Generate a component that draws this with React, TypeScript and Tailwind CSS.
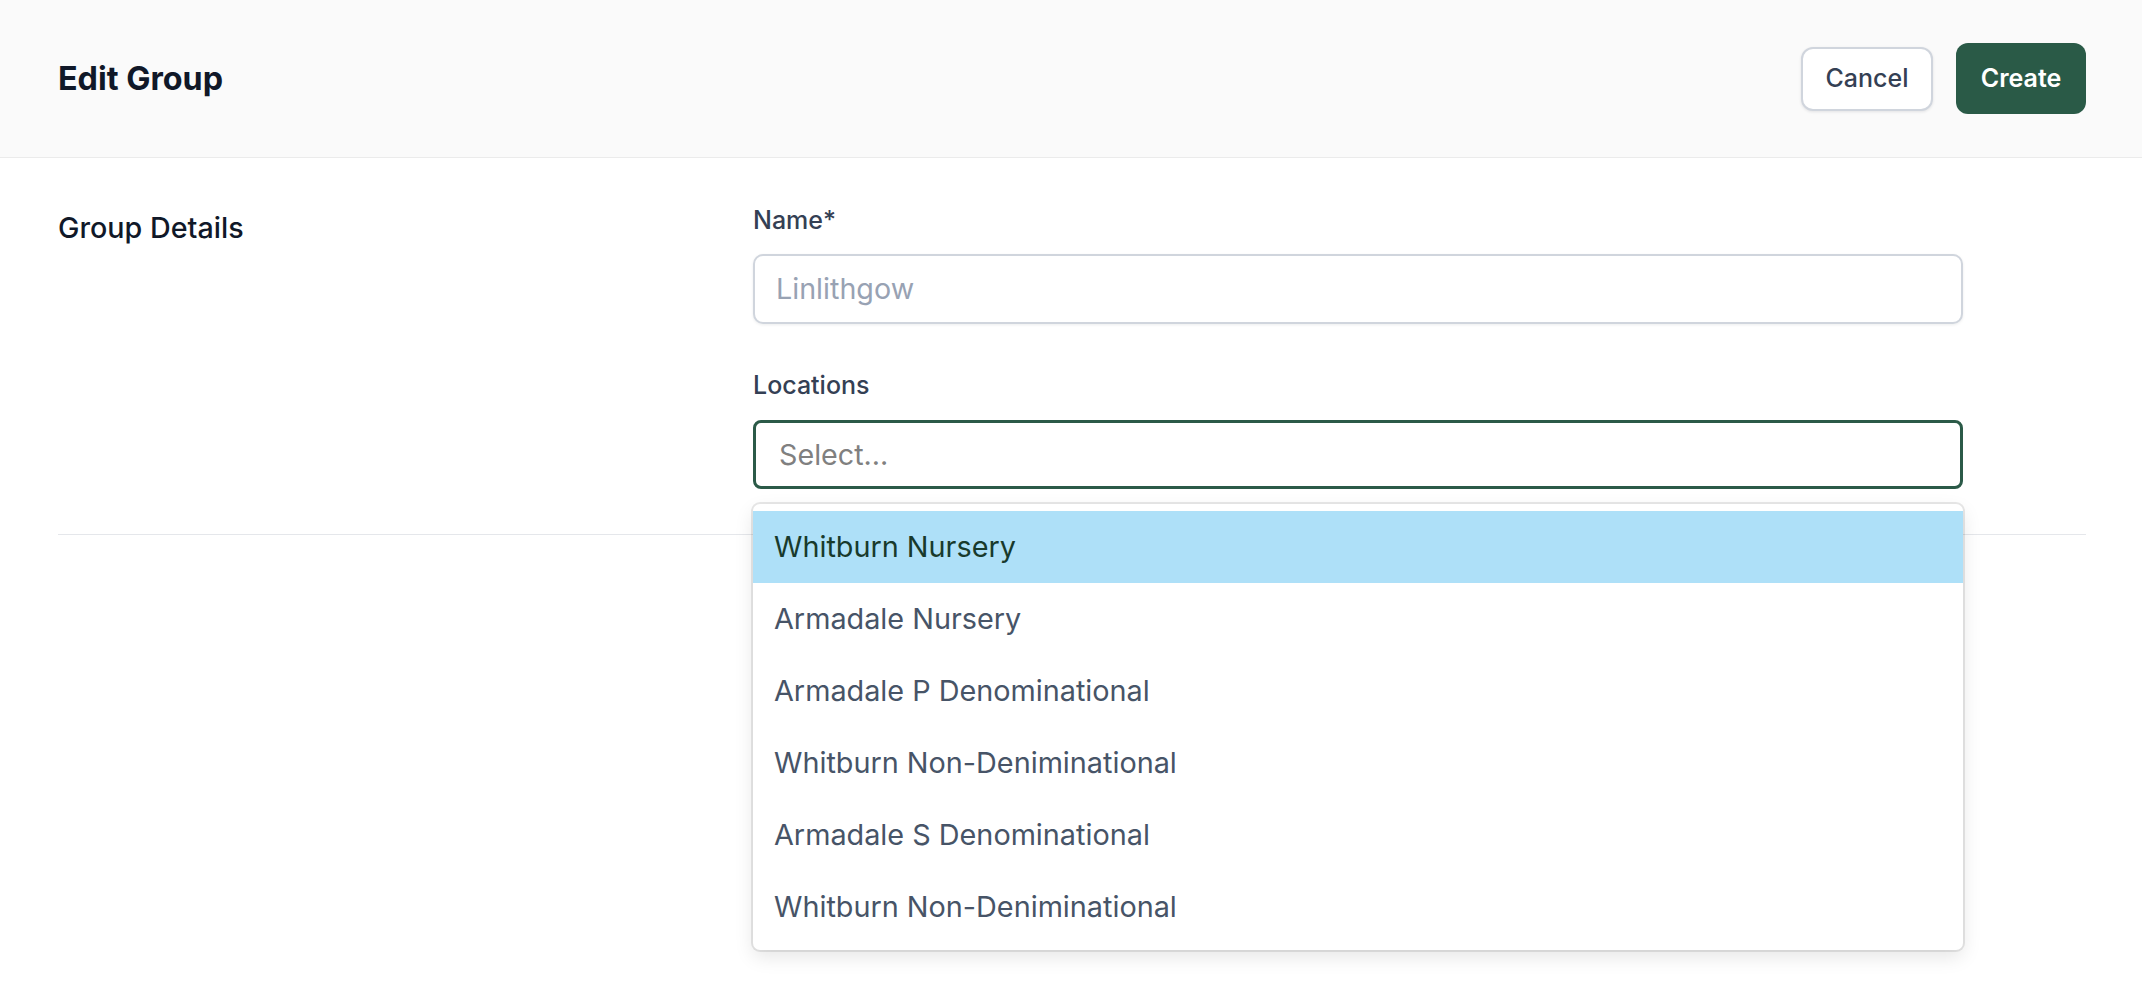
import React from "react";

const options = [
  "Whitburn Nursery",
  "Armadale Nursery",
  "Armadale P Denominational",
  "Whitburn Non-Deniminational",
  "Armadale S Denominational",
  "Whitburn Non-Deniminational",
];

export default function App() {
  return (
    <div className="min-h-screen bg-white font-['Inter',sans-serif]">
      <header className="h-[158px] bg-[#fafafa] border-b border-[#ebebeb] flex items-center justify-between pl-[58px] pr-[56px]">
        <h1 className="text-[32.3px] leading-[42px] font-bold text-[#101828]">Edit Group</h1>
        <div className="flex items-center gap-[23px]">
          <button className="h-[64px] w-[132px] rounded-[12px] border-2 border-[#d0d5dd] bg-white text-[25px] font-medium text-[#344054] shadow-[0_1px_3px_rgba(16,24,40,0.1)]">
            Cancel
          </button>
          <button className="h-[71px] w-[130px] rounded-[12px] bg-[#2a5a47] text-[25px] font-semibold text-white">
            Create
          </button>
        </div>
      </header>
      <div className="pl-[58px] pr-[56px]">
        <section className="flex border-b border-[#e5e7eb] pt-[45px] pb-[45px]">
          <div className="w-[695px] shrink-0">
            <h2 className="mt-[4px] text-[28.7px] leading-[42px] font-medium text-[#101828]">Group Details</h2>
          </div>
          <div className="w-[1210px]">
            <label className="block text-[25px] leading-[35px] font-medium text-[#344054]">Name*</label>
            <div className="mt-[16px] h-[70px] rounded-[10px] border-2 border-[#d0d5dd] bg-white shadow-[0_1px_3px_rgba(16,24,40,0.08)] flex items-center pl-[21px]">
              <span className="text-[28.7px] text-[#98a2b3]">Linlithgow</span>
            </div>
            <label className="block mt-[44px] text-[25px] leading-[35px] font-medium text-[#344054]">Locations</label>
            <div className="relative mt-[17px]">
              <div className="h-[69px] rounded-[8px] border-[3px] border-[#2b5a48] bg-white flex items-center pl-[23px]">
                <span className="text-[28.7px] text-[#808080]">Select...</span>
              </div>
              <div className="absolute left-0 right-0 top-full mt-[15px] z-10 bg-white rounded-[7px] py-[7px] shadow-[0_0_0_2px_rgba(0,0,0,0.09),0_7px_19px_rgba(0,0,0,0.1)]">
                {options.map((o, i) => (
                  <div
                    key={i}
                    className={
                      i === 0
                        ? "h-[72px] flex items-center pl-[21px] text-[28.8px] bg-[#aee0f8] text-[#183a2c]"
                        : "h-[72px] flex items-center pl-[21px] text-[28.8px] text-[#475467]"
                    }
                  >
                    {o}
                  </div>
                ))}
              </div>
            </div>
          </div>
        </section>
      </div>
    </div>
  );
}
